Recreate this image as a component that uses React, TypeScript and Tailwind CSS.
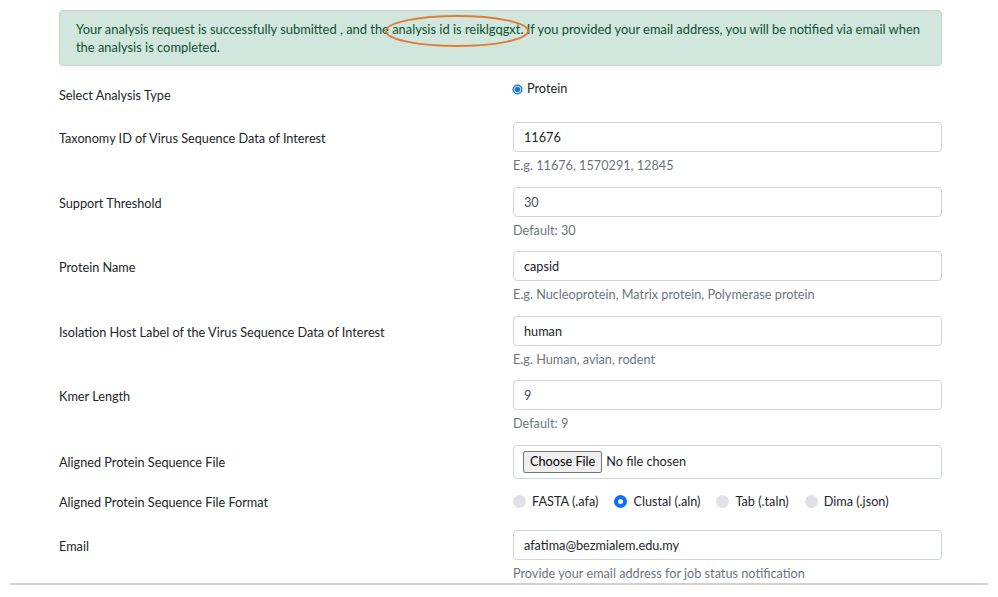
import React from "react";

const font = { fontFamily: 'Lato, "Noto Sans", sans-serif' };

function Field({ label, value, help, muted }: { label: string; value: string; help: string; muted?: boolean }) {
  return (
    <div className="grid grid-cols-[454px_1fr] pb-[13.6px]">
      <div className="pt-[6px] text-[12.7px] leading-5 text-[#212529]">{label}</div>
      <div>
        <div className={`h-[30px] w-full rounded-[4px] border border-[#ced4da] bg-white px-[10px] text-[12.7px] leading-[28px] ${muted ? "text-[#495057]" : "text-[#212529]"}`}>
          {value}
        </div>
        <div className="mt-[5px] text-[12.7px] leading-4 text-[#6c757d]">{help}</div>
      </div>
    </div>
  );
}

function Radio({ checked, label }: { checked?: boolean; label: string }) {
  return (
    <div className="flex items-center">
      {checked ? (
        <span className="box-border h-[13px] w-[13px] rounded-full border-[4px] border-[#0d6efd] bg-white" />
      ) : (
        <span className="h-[13px] w-[13px] rounded-full bg-[#dee2e6]" />
      )}
      <span className="ml-[6px] text-[12.7px] text-[#212529]">{label}</span>
    </div>
  );
}

export default function App() {
  return (
    <div className="min-h-[597px] w-[998px] bg-white" style={font}>
      <div className="mx-[59px] w-[883px] pt-[10px]">
        <div className="relative rounded-[4px] border border-[#badbcc] bg-[#d1e7dd] px-[16px] py-[9px] text-[12.9px] leading-[18px] text-[#0f5132]">
          Your analysis request is successfully submitted , and the analysis id is reiklgqgxt. If you provided your email address, you will be notified via email when the analysis is completed.
          <svg className="absolute left-[324px] top-[3px]" width="146" height="34" viewBox="0 0 146 34">
            <ellipse cx="73" cy="17" rx="71" ry="15" fill="none" stroke="#e27a36" strokeWidth="2" />
          </svg>
        </div>

        <div className="grid h-[56px] grid-cols-[454px_1fr] pt-[14px]">
          <div className="pt-[5px] text-[12.7px] leading-5 text-[#212529]">Select Analysis Type</div>
          <div className="flex h-[18px] items-center text-[12.7px] text-[#212529]">
            <svg width="11" height="11" viewBox="0 0 11 11" className="ml-[-1px]">
              <circle cx="5.5" cy="5.5" r="5" fill="#1a73e8" />
              <circle cx="5.5" cy="5.5" r="3.6" fill="white" />
              <circle cx="5.5" cy="5.5" r="2.8" fill="#1a73e8" />
            </svg>
            <span className="ml-[4px]">Protein</span>
          </div>
        </div>

        <Field label="Taxonomy ID of Virus Sequence Data of Interest" value="11676" help="E.g. 11676, 1570291, 12845" />
        <Field label="Support Threshold" value="30" help="Default: 30" muted />
        <Field label="Protein Name" value="capsid" help="E.g. Nucleoprotein, Matrix protein, Polymerase protein" />
        <Field label="Isolation Host Label of the Virus Sequence Data of Interest" value="human" help="E.g. Human, avian, rodent" />
        <Field label="Kmer Length" value="9" help="Default: 9" muted />

        <div className="grid grid-cols-[454px_1fr]">
          <div className="pt-[7px] text-[12.7px] leading-5 text-[#212529]">Aligned Protein Sequence File</div>
          <div className="flex h-[34px] items-center rounded-[4px] border border-[#ced4da] bg-white pl-[9px]">
            <span className="flex h-[22px] items-center rounded-[2px] border border-[#767676] bg-[#efefef] px-[6px] text-[12.7px] text-black">Choose File</span>
            <span className="ml-[4px] text-[12.7px] text-[#212529]">No file chosen</span>
          </div>
        </div>

        <div className="grid h-[51px] grid-cols-[454px_1fr] pt-[13px]">
          <div className="text-[12.7px] leading-5 text-[#212529]">Aligned Protein Sequence File Format</div>
          <div className="flex h-5 items-center gap-[16px]">
            <Radio label="FASTA (.afa)" />
            <Radio checked label="Clustal (.aln)" />
            <Radio label="Tab (.taln)" />
            <Radio label="Dima (.json)" />
          </div>
        </div>

        <div className="grid grid-cols-[454px_1fr]">
          <div className="pt-[6px] text-[12.7px] leading-5 text-[#212529]">Email</div>
          <div>
            <div className="h-[30px] w-full rounded-[4px] border border-[#ced4da] bg-white px-[10px] text-[12.7px] leading-[28px] text-[#212529]">
              afatima@bezmialem.edu.my
            </div>
            <div className="mt-[5px] text-[12.7px] leading-4 text-[#6c757d]">Provide your email address for job status notification</div>
          </div>
        </div>
      </div>
      <div className="mx-[10px] mt-[2px] h-[2px] w-[978px] bg-[#d6cfd0]" />
    </div>
  );
}
